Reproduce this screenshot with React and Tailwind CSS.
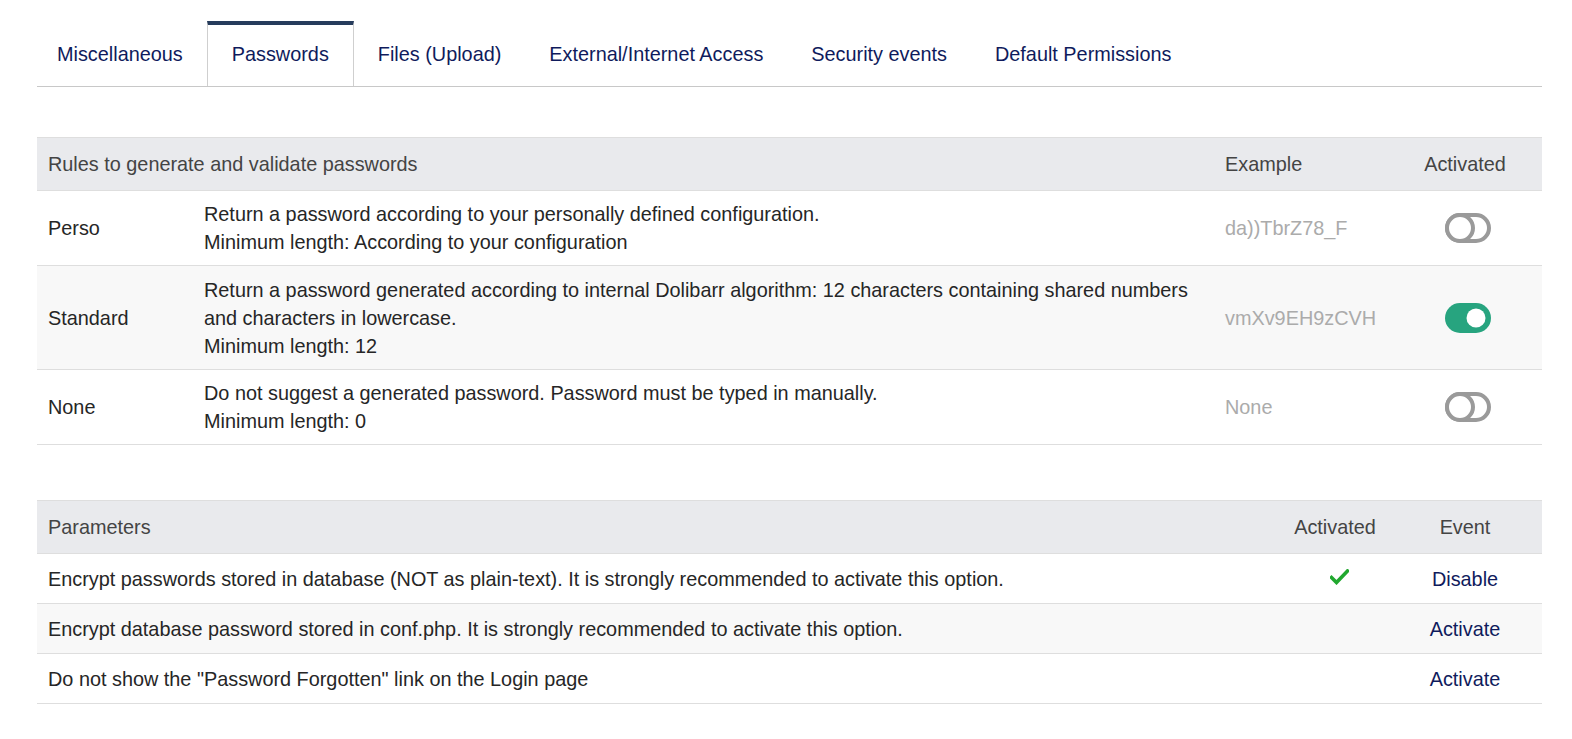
import React from 'react';

const tabs = [
  'Miscellaneous',
  'Passwords',
  'Files (Upload)',
  'External/Internet Access',
  'Security events',
  'Default Permissions',
];

const rules = [
  {
    name: 'Perso',
    lines: [
      'Return a password according to your personally defined configuration.',
      'Minimum length: According to your configuration',
    ],
    example: 'da))TbrZ78_F',
    on: false,
  },
  {
    name: 'Standard',
    lines: [
      'Return a password generated according to internal Dolibarr algorithm: 12 characters containing shared numbers',
      'and characters in lowercase.',
      'Minimum length: 12',
    ],
    example: 'vmXv9EH9zCVH',
    on: true,
    striped: true,
  },
  {
    name: 'None',
    lines: [
      'Do not suggest a generated password. Password must be typed in manually.',
      'Minimum length: 0',
    ],
    example: 'None',
    on: false,
  },
];

const params = [
  { label: 'Encrypt passwords stored in database (NOT as plain-text). It is strongly recommended to activate this option.', active: true, action: 'Disable' },
  { label: 'Encrypt database password stored in conf.php. It is strongly recommended to activate this option.', active: false, action: 'Activate', striped: true },
  { label: 'Do not show the "Password Forgotten" link on the Login page', active: false, action: 'Activate' },
];

const Toggle = ({ on }) =>
  on ? (
    <svg width="46" height="30" viewBox="0 0 46 30" className="ml-[6px]">
      <rect x="0" y="0" width="46" height="30" rx="15" fill="#27a47f" />
      <circle cx="31" cy="15" r="9.5" fill="#fff" />
    </svg>
  ) : (
    <svg width="46" height="30" viewBox="0 0 46 30" className="ml-[6px]">
      <rect x="2" y="2" width="42" height="26" rx="13" fill="none" stroke="#9a9a9a" strokeWidth="4" />
      <circle cx="15" cy="15" r="13" fill="#fff" stroke="#9a9a9a" strokeWidth="4" />
    </svg>
  );

const Check = () => (
  <svg width="19" height="16" viewBox="0 0 19 16" className="ml-[8px] -mt-[4px]">
    <path d="M1.5 8.5 L6.5 13.5 L17.5 2" fill="none" stroke="#21a82f" strokeWidth="3.6" strokeLinecap="square" />
  </svg>
);

export default function App() {
  return (
    <div className="min-h-[739px] bg-white pl-[37px] pr-[30px] pt-[21px] font-['Liberation_Sans',Arial,sans-serif] text-[19.85px] leading-[28px] text-[#262626]">
      {/* Tabs */}
      <div className="border-b border-[#c8c8c8]">
        <div className="-ml-[4px] flex">
          {tabs.map((t) =>
            t === 'Passwords' ? (
              <div key={t} className="flex h-[65px] items-center border-x border-t-4 border-x-[#cfcfcf] border-t-[#263c5c] bg-white px-6 pb-[3px] text-[#0f1b5c]">
                {t}
              </div>
            ) : (
              <div key={t} className="flex h-[65px] items-center border-t-4 border-t-transparent px-6 pb-[3px] text-[#0f1b5c]">
                {t}
              </div>
            )
          )}
        </div>
      </div>

      {/* Password rules */}
      <div className="mt-[50px] border-t border-b border-[#dedede]">
        <div className="grid h-[52px] grid-cols-[156px_1021px_174px_154px] items-center bg-[#e9eaed] text-[#444]">
          <div className="col-span-2 pl-[11px]">Rules to generate and validate passwords</div>
          <div className="pl-[11px]">Example</div>
          <div className="text-center">Activated</div>
        </div>
        {rules.map((r) => (
          <div
            key={r.name}
            className={`grid grid-cols-[156px_1021px_174px_154px] items-center border-t border-[#dedede] ${r.striped ? 'bg-[#f8f8f8] py-[9.5px]' : 'bg-white py-[9px]'}`}
          >
            <div className="pl-[11px]">{r.name}</div>
            <div className="pl-[11px]">
              {r.lines.map((l) => (
                <div key={l}>{l}</div>
              ))}
            </div>
            <div className="pl-[11px] text-[#ababab]">{r.example}</div>
            <div className="flex justify-center">
              <Toggle on={r.on} />
            </div>
          </div>
        ))}
      </div>

      {/* Parameters */}
      <div className="mt-[55px] border-t border-b border-[#dedede]">
        <div className="grid h-[52px] grid-cols-[1245px_106px_154px] items-center bg-[#e9eaed] text-[#444]">
          <div className="pl-[11px]">Parameters</div>
          <div className="text-center">Activated</div>
          <div className="text-center">Event</div>
        </div>
        {params.map((p) => (
          <div
            key={p.label}
            className={`grid h-[50px] grid-cols-[1245px_106px_154px] items-center border-t border-[#dedede] ${p.striped ? 'bg-[#f8f8f8]' : 'bg-white'}`}
          >
            <div className="pl-[11px]">{p.label}</div>
            <div className="flex justify-center">{p.active && <Check />}</div>
            <div className="text-center text-[#0f1b5c]">{p.action}</div>
          </div>
        ))}
      </div>
    </div>
  );
}
